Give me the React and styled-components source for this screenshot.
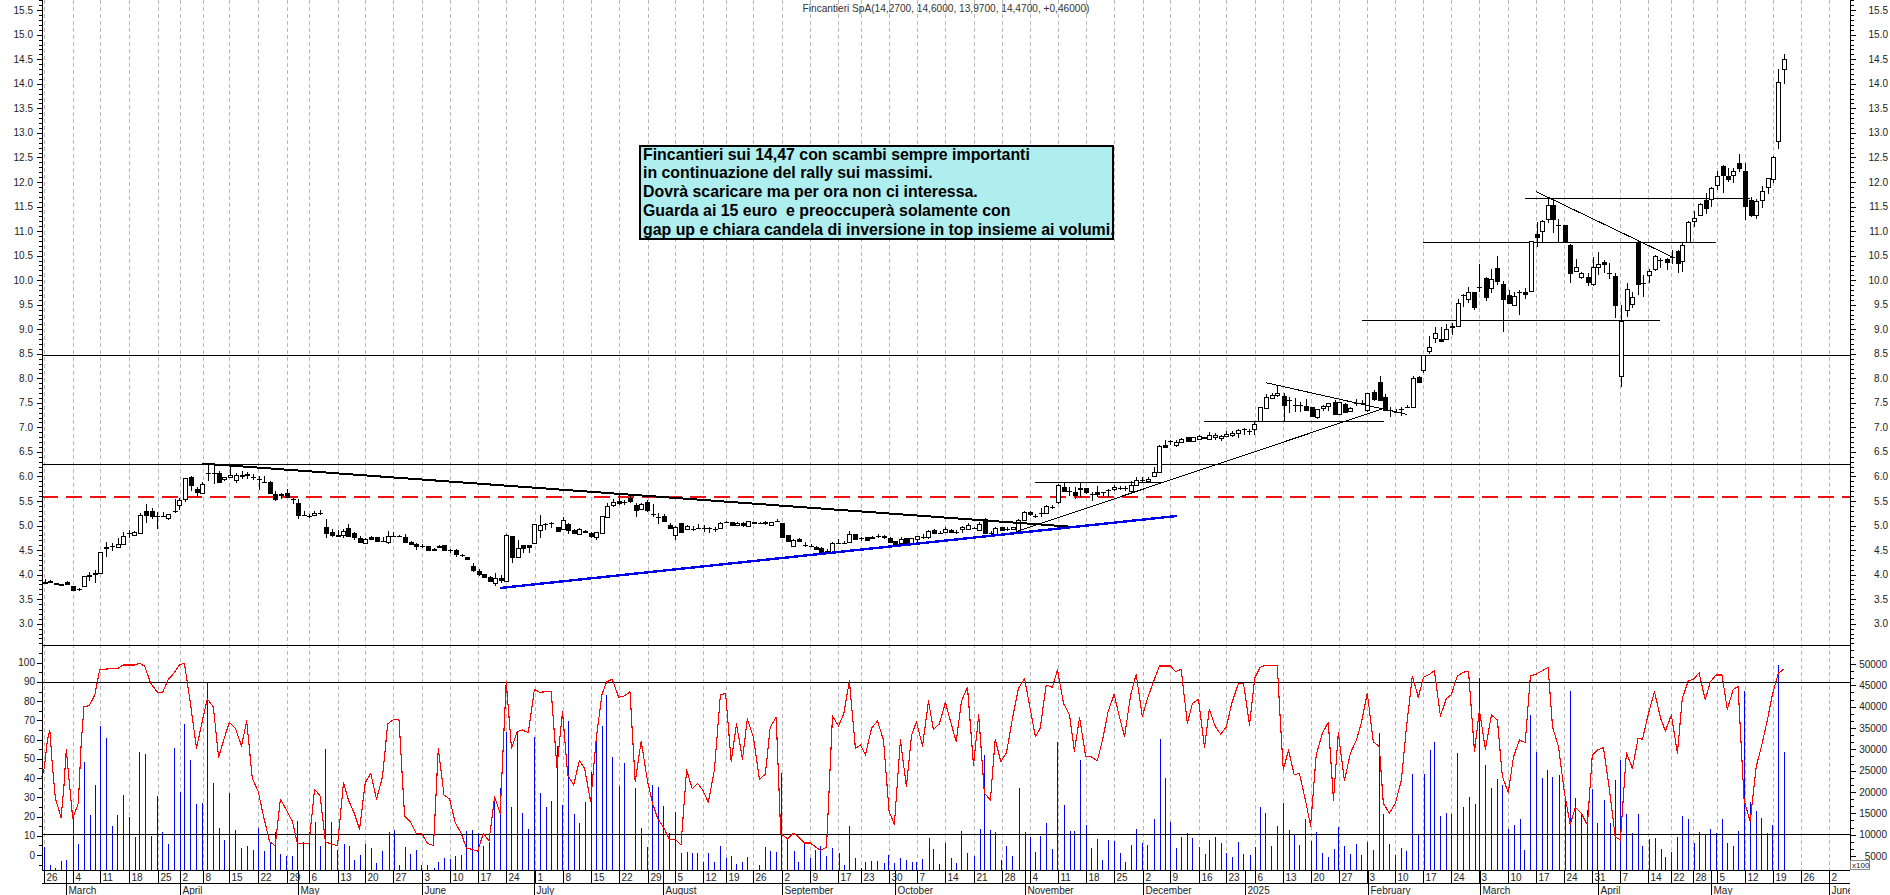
import React from "react";
import styled, { createGlobalStyle } from "styled-components";

const GlobalStyle = createGlobalStyle`
  html, body { margin: 0; padding: 0; background: #fff; }
`;
const Page = styled.div`
  position: relative; width: 1890px; height: 895px; overflow: hidden; background: #fff;
  font-family: "Liberation Sans", Arial, sans-serif;
`;
const ChartSvg = styled.svg`display: block;`;
const ChartTitle = styled.div`
  position: absolute; left: 42px; width: 1808px; top: 3px; text-align: center;
  font-size: 10.15px; line-height: 12px; color: #333;
`;
const Note = styled.div`
  position: absolute; left: 639px; top: 145px; width: 475px; height: 95px; box-sizing: border-box;
  border: 2px solid #000; background: #afeeee; padding: 0 0 0 2px;
  display: flex; flex-direction: column; justify-content: center;
  font-size: 15.9px; font-weight: 700; line-height: 18.8px; color: #000; white-space: pre;
`;
const GridLine = styled.line`stroke: #b8b8b8; stroke-width: 1; stroke-dasharray: 4 3;`;
const Rule = styled.line`stroke: #000; stroke-width: ${p => p.$w || 1};`;
const Trend = styled.line`stroke: ${p => p.$c || "#000"}; stroke-width: ${p => p.$w || 1};`;
const RedDash = styled.line`stroke: #f01010; stroke-width: 2; stroke-dasharray: 16 8;`;
const Wick = styled.line`stroke: #000; stroke-width: 1;`;
const Body = styled.rect`stroke: #000; stroke-width: 1; fill: ${p => (p.$filled ? "#000" : "#fff")};`;
const VolBar = styled.line`stroke: #0000ff; stroke-width: 1;`;
const Stoch = styled.polyline`fill: none; stroke: #ff0000; stroke-width: 1.1; stroke-linejoin: round;`;
const Label = styled.text`
  font-family: "Liberation Sans", Arial, sans-serif; font-size: 10px; fill: #222;
  text-anchor: ${p => p.$anchor || "start"};
`;
const TinyLabel = styled(Label)`font-size: 8px;`;
const TinyBox = styled.rect`fill: #fff; stroke: #888; stroke-width: 1;`;

const seg = (ox, sx, oy, rows) =>
  rows.map(([zx, t, b, h, l, f]) => ({
    x: Math.round(ox + zx / sx),
    t: Math.round(oy + t / 3),
    b: Math.round(oy + b / 3),
    h: Math.round(oy + h / 3),
    l: Math.round(oy + l / 3),
    f: !!f,
  }));

const candles = [
  ...seg(0, 3, 530, [
    [135,156,160,148,162,1],[150,152,155,150,157,1],[168,158,161,158,161,1],[184,162,166,161,167,1],[201,157,161,153,163,1],
    [219,169,181,167,183,1],[236,177,178,175,182,1],[252,139,168,137,170,0],[268,134,138,127,152,1],[285,130,132,120,158,1],
    [301,67,128,66,130,0],[319,52,54,36,80,1],[335,47,49,38,64,1],[353,43,52,25,53,0],[370,19,41,6,42,0],
  ]),
  ...seg(0, 3, 440, [
    [388,280,280,270,293,1],[402,277,285,272,288,0],[420,226,278,220,280,0],[438,214,224,192,248,1],[456,213,227,204,236,1],
    [472,228,228,215,268,1],[489,228,228,216,232,1],[505,223,233,223,240,0],[524,214,214,178,220,1],[537,181,194,175,210,0],
    [555,115,176,114,186,0],[573,111,134,108,153,1],[590,147,156,140,172,1],[606,132,158,125,160,0],[624,98,98,73,122,1],
    [641,98,98,74,132,1],[657,98,126,94,128,1],[672,112,118,110,122,0],[689,106,112,78,114,0],[708,106,120,100,128,0],
    [725,104,108,93,116,1],[741,102,105,96,116,1],[758,111,111,103,119,1],[776,116,116,108,150,1],[792,125,125,108,128,1],
    [810,126,158,124,162,1],[826,163,176,153,182,1],[842,162,166,160,176,1],[860,160,170,147,173,1],[878,178,178,173,192,1],
    [895,190,224,178,237,1],[912,225,225,213,229,1],[926,227,227,221,235,1],[943,218,226,212,228,0],[961,219,219,210,226,1],
    [977,262,278,237,294,1],[995,277,286,268,292,1],[1013,285,289,271,290,1],[1028,274,286,266,293,0],[1045,265,287,252,288,1],
    [1062,278,292,276,300,1],[1079,294,305,288,308,1],[1095,298,310,294,312,0],[1113,290,297,288,300,1],[1131,292,304,292,305,1],
    [1149,302,302,290,306,1],[1164,289,305,274,312,0],[1180,287,287,276,292,1],[1197,288,288,284,291,1],[1214,292,305,282,308,1],
    [1233,306,311,304,316,1],[1249,313,317,309,330,1],[1265,317,317,312,323,1],[1284,319,329,319,330,1],[1301,326,331,325,332,1],
    [1316,319,322,316,323,1],[1333,316,331,314,332,1],[1350,331,331,326,338,1],[1368,330,342,327,350,1],[1385,345,345,342,350,1],
    [1402,352,358,352,360,1],
  ]),
  ...seg(0, 3, 530, [[1419,108,120,99,126,1],[1436,123,132,117,138,1]]),
  ...seg(480, 2.613, 470, [
    [10,313,320,311,324,1],[25,321,332,318,335,1],[40,325,338,308,347,0],[55,323,329,315,340,1],[68,196,334,193,336,0],
    [84,198,262,198,280,1],[98,234,262,210,262,0],[113,226,234,224,248,1],[127,226,232,224,248,1],[141,163,220,162,222,0],
    [157,166,179,136,205,0],[171,163,163,158,180,1],[186,160,160,155,175,1],[203,172,182,170,184,1],[217,149,176,140,176,0],
    [231,162,180,160,193,1],[245,180,189,176,193,1],[259,178,191,174,193,0],[275,184,187,181,190,1],[290,190,199,186,203,1],
    [304,187,201,185,210,0],[319,139,188,138,188,0],[332,109,140,100,142,0],[347,96,106,88,112,0],[362,94,98,70,105,1],
    [377,96,96,90,104,1],[392,83,92,78,100,1],[407,105,120,100,140,1],[421,102,118,100,120,0],[436,96,120,90,125,1],
    [451,132,132,102,140,1],[465,140,140,128,162,1],[480,138,152,133,153,1],[496,165,174,160,177,1],[510,172,194,168,210,0],
    [525,160,186,158,190,1],[540,168,178,165,180,0],[556,177,177,168,182,1],[570,173,173,163,178,1],[585,173,173,165,185,1],
    [598,175,175,170,190,1],[614,176,176,170,186,1],[628,160,173,155,175,0],[642,155,157,152,158,1],[658,157,166,155,167,1],
    [672,160,166,156,168,0],[686,160,164,157,172,1],[701,154,167,152,170,0],[716,155,158,155,158,1],[731,160,160,157,163,1],
    [746,155,160,152,165,1],[760,157,165,157,165,0],[776,153,153,147,157,1],[789,160,200,158,200,1],[804,196,213,195,216,1],
    [818,210,227,208,228,0],[833,206,214,205,217,1],[848,225,225,217,231,1],[864,227,227,222,232,1],[878,230,237,227,240,1],
    [892,233,245,232,247,1],[907,242,242,237,248,1],[921,220,246,215,246,0],[936,219,219,208,220,1],[950,218,218,213,222,1],
    [965,192,215,184,216,0],[981,192,208,192,210,1],[996,204,204,200,212,1],[1010,202,210,200,214,1],[1024,200,204,198,206,1],
    [1040,198,198,193,204,1],[1056,197,202,195,208,1],[1071,203,215,200,218,1],[1085,213,222,212,225,1],[1100,208,218,200,222,0],
    [1114,204,222,204,222,1],[1127,204,222,204,222,0],[1142,199,206,197,216,0],[1157,201,201,193,207,1],[1171,184,201,180,206,0],
    [1187,181,189,176,192,1],[1202,188,188,183,193,1],[1216,178,186,170,187,0],[1231,179,186,176,188,1],[1245,186,186,180,192,1],
    [1260,171,178,167,190,0],[1275,165,176,160,178,0],[1290,175,175,172,178,1],[1304,162,179,155,181,0],[1320,148,190,145,192,1],
    [1334,190,190,183,192,1],[1347,175,192,172,193,0],[1363,172,180,170,182,1],[1378,178,178,172,184,1],[1392,172,177,172,177,0],
    [1407,150,182,146,183,0],[1421,127,150,122,150,0],[1437,125,133,124,137,1],[1451,137,137,133,145,1],[1465,130,130,115,140,1],
    [1480,108,130,105,131,0],[1495,110,110,106,117,1],
  ]),
  ...seg(1040, 3, 360, [
    [53,376,427,372,432,0],[72,380,392,370,396,1],[87,393,393,380,408,1],[105,395,404,382,416,1],[120,385,388,368,410,1],
    [138,385,397,383,402,1],[155,402,402,395,422,1],[172,395,401,378,410,1],[188,397,397,395,408,1],[205,391,391,388,410,1],
    [222,381,387,375,392,0],[240,383,383,378,390,1],[255,384,384,378,392,1],[273,376,394,362,398,0],[289,360,375,352,378,0],
    [307,361,361,350,366,1],[323,356,362,350,366,0],[341,337,349,322,350,0],[358,257,337,256,339,0],[375,256,260,241,265,1],
    [391,244,244,240,255,1],[408,247,256,240,262,0],[424,236,246,234,250,0],[443,230,244,230,244,1],[459,232,242,232,242,0],
    [476,229,236,224,240,0],[493,230,235,230,235,1],[508,224,236,216,238,0],[525,225,232,218,240,0],[542,228,234,224,242,0],
    [559,222,228,212,230,0],[576,219,226,212,230,0],[594,209,218,207,235,0],[611,208,208,204,225,1],[628,212,212,208,226,1],
    [643,192,208,187,224,0],[660,142,184,141,184,0],[677,112,145,103,146,0],[696,106,114,100,118,0],[712,100,106,74,112,0],
    [731,109,136,100,186,1],[748,120,120,112,160,1],[765,134,134,115,155,1],[780,135,135,125,155,1],[797,139,149,116,152,1],
    [815,142,168,140,170,1],[830,148,170,146,178,0],[848,137,143,135,153,0],[864,130,137,128,153,0],[884,127,163,120,165,1],
    [897,127,163,127,163,0],[915,132,157,130,158,1],[930,143,154,140,156,0],[948,130,130,118,138,1],[965,129,129,120,135,1],
    [982,100,151,98,155,0],[1001,97,117,90,124,1],[1019,67,119,47,120,1],[1034,112,150,103,152,1],[1049,150,150,140,170,1],
    [1067,155,155,147,160,1],[1083,147,147,140,167,1],[1101,140,140,136,143,1],[1118,54,141,48,143,0],[1137,52,65,47,68,1],
  ]),
  ...seg(1400, 3, 40, [
    [69,945,990,944,998,0],[86,922,932,888,942,0],[104,880,895,862,908,0],[122,896,904,862,905,1],[138,868,896,852,900,0],
    [156,858,862,850,885,1],[173,790,858,778,860,0],[190,766,766,762,800,1],[205,757,778,742,788,0],[223,757,800,755,810,1],
    [238,740,740,672,755,1],[258,715,770,710,782,1],[273,717,745,686,758,0],[292,685,722,648,736,1],[308,733,778,724,876,1],
    [327,766,788,750,790,1],[341,767,794,755,797,0],[358,755,755,750,825,1],[375,756,761,745,776,1],[393,604,752,603,752,0],
    [410,583,590,545,622,1],[426,544,574,540,606,0],[444,496,538,472,550,0],[458,496,536,476,578,1],[475,555,555,538,605,1],
    [494,555,602,555,610,1],[511,616,698,612,728,1],[528,682,692,658,695,0],[544,700,712,697,716,0],[563,712,725,698,738,1],
    [579,680,733,652,738,0],[594,673,680,636,705,0],[611,666,671,660,700,1],[627,698,698,670,716,1],[646,709,794,698,833,1],
    [662,842,1008,794,1040,0],[680,746,810,730,830,0],[696,772,791,755,803,0],[715,606,731,604,765,1],[730,729,729,705,770,1],
    [747,692,706,686,730,0],[764,647,688,646,693,0],[780,661,661,655,683,1],[800,658,667,655,689,1],[815,650,650,630,672,1],
    [834,632,668,630,700,1],[847,614,664,610,695,0],[864,545,606,544,610,0],[882,535,544,514,560,0],[899,491,525,490,527,0],
    [918,481,503,460,522,1],[933,443,478,440,500,0],[951,407,436,392,450,0],[969,379,406,376,458,1],[984,409,418,385,425,1],
    [1000,392,405,385,428,0],[1017,370,383,343,395,1],[1035,392,499,370,540,1],[1052,481,524,472,530,1],[1068,484,526,476,536,0],
    [1086,452,481,438,503,0],[1103,415,441,415,461,0],[1118,350,416,349,428,0],[1135,127,304,88,326,0],[1152,58,88,42,132,0],
  ]),
];

const volRows = [
  [0, [[110,622],[124,675],[138,683],[153,663],[165,660],[181,535],[195,612],[210,367],[223,525],[236,435],[250,258],[264,294],[278,558],[292,525],[307,465],[322,532],[335,592],[347,336],[362,342],[377,588],[392,468],[404,576],[419,612],[434,324],[447,456],[459,252],[474,360],[489,492],[504,489],[516,127],[531,429],[544,564],[558,600],[571,459],[586,570],[601,624],[616,618],[629,630],[643,564],[656,633],[671,606],[685,576],[698,642],[713,648],[728,648],[740,543],[755,606],[769,576],[783,546],[797,618],[810,327],[825,546],[840,630],[855,612],[868,618],[881,660],[895,645],[909,612],[923,624],[937,670],[952,633],[967,576],[980,570],[993,675],[1007,621],[1021,642],[1036,630],[1049,675],[1064,675],[1079,685],[1091,666],[1105,654],[1119,657],[1133,648],[1148,645],[1161,573],[1175,570],[1189,579],[1203,618],[1217,606],[1229,486],[1245,444],[1260,276],[1273,500],[1287,276],[1300,519],[1315,567],[1330,291],[1343,459],[1358,501],[1372,483],[1386,318],[1399,495],[1413,243],[1428,522],[1442,549],[1455,486],[1470,396],[1484,291],[1498,258],[1509,165],[1524,351],[1540,438],[1554,369]]],
  [630, [[13,444],[28,564],[43,621],[56,435],[69,441],[83,498],[98,579],[113,516],[127,640],[141,636],[155,639],[168,639],[181,666],[195,639],[210,666],[225,618],[238,654],[252,648],[265,672],[280,666],[292,651],[307,690],[322,675],[337,621],[349,633],[364,636],[375,399],[392,597],[407,633],[419,666],[434,609],[449,654],[461,630],[474,618],[489,648],[504,624],[519,639],[532,675],[546,558],[561,654],[576,684],[586,666],[601,663],[616,663],[631,669],[643,645],[658,669],[673,654],[688,660],[701,666],[713,666],[728,657],[743,594],[755,627],[770,672],[785,609],[798,654],[812,669],[825,573],[840,639],[855,648],[870,567],[882,345],[897,570],[909,576],[923,660],[937,618],[952,648],[967,444],[982,576],[995,591],[1009,636],[1021,588],[1036,549],[1051,627],[1064,306],[1079,495],[1094,573],[1106,573],[1119,360],[1134,555],[1148,624],[1163,597],[1176,660],[1190,600],[1205,603],[1220,639],[1231,666],[1246,615],[1260,567],[1275,609],[1288,615],[1303,537],[1318,297],[1332,414],[1345,546],[1358,624],[1372,591],[1387,579],[1400,594],[1415,621],[1430,642],[1442,600],[1457,591],[1470,609],[1484,639],[1499,651],[1514,606],[1527,642],[1542,645],[1555,621]]],
  [1260, [[0,501],[13,519],[28,618],[43,558],[58,489],[71,570],[85,585],[98,615],[113,537],[128,603],[140,576],[155,639],[170,651],[183,627],[195,561],[210,618],[225,642],[240,612],[252,645],[267,606],[282,630],[297,279],[307,522],[322,612],[337,645],[352,624],[364,633],[379,402],[394,585],[407,402],[422,330],[434,306],[449,528],[464,519],[476,522],[491,339],[506,501],[519,471],[534,492],[546,114],[561,375],[576,444],[591,417],[603,435],[618,567],[631,555],[646,537],[658,630],[673,225],[688,336],[703,414],[715,390],[728,411],[743,405],[758,470],[772,153],[785,474],[800,520],[815,510],[827,447],[840,549],[855,480],[870,549],[884,420],[897,360],[912,522],[927,579],[941,522],[952,618],[967,597],[982,594],[997,627],[1009,651],[1024,636],[1039,591],[1051,528],[1066,537],[1079,609],[1093,576],[1108,585],[1121,567],[1135,579],[1150,537],[1163,609],[1178,618],[1190,573],[1205,153],[1220,486],[1235,513],[1248,534],[1263,579],[1275,555],[1290,75],[1303,336]]],
];
const volumes = volRows.flatMap(([ox, rows]) =>
  rows.map(([zx, zy]) => ({ x: Math.round(ox + zx / 2.489) + 0.5, y: Math.round(640 + zy / 3) }))
);

const stochRows = [
  [0, [[104,410],[110,385],[118,300],[124,270],[130,370],[138,475],[152,533],[159,440],[165,328],[172,420],[181,535],[195,490],[202,310],[209,200],[222,197],[236,165],[248,90],[264,87],[292,86],[307,75],[336,75],[347,70],[360,78],[375,130],[392,157],[405,157],[419,118],[434,98],[446,75],[459,70],[474,190],[489,325],[504,240],[516,177],[531,200],[544,352],[558,295],[571,247],[586,265],[601,318],[614,243],[628,415],[643,455],[656,530],[671,605],[685,617],[698,478],[713,510],[728,545],[740,610],[769,610],[783,448],[797,468],[810,606],[825,612],[840,617],[855,428],[868,482],[881,518],[895,568],[909,428],[923,400],[937,478],[952,410],[965,252],[980,238],[993,240],[1007,528],[1021,545],[1036,580],[1050,581],[1064,610],[1079,617],[1091,325],[1105,465],[1119,477],[1133,548],[1148,580],[1161,625],[1175,628],[1189,634],[1203,580],[1217,603],[1231,470],[1245,520],[1260,125],[1273,325],[1287,275],[1300,270],[1315,278],[1330,148],[1343,157],[1372,154],[1386,382],[1400,215],[1413,405],[1428,435],[1442,362],[1455,385],[1470,485],[1484,298],[1498,165],[1510,125],[1524,118],[1540,172],[1554,168]]],
  [630, [[0,155],[13,425],[28,303],[43,420],[56,490],[69,535],[83,560],[98,598],[113,598],[127,615],[141,390],[155,447],[168,430],[181,450],[195,487],[210,390],[225,165],[238,160],[252,365],[265,252],[280,358],[292,237],[307,290],[322,418],[337,402],[349,262],[364,232],[375,580],[392,597],[407,580],[419,590],[434,609],[449,609],[461,620],[474,631],[489,622],[504,228],[519,258],[532,222],[546,123],[561,325],[574,315],[586,345],[601,265],[616,243],[631,300],[645,515],[658,553],[673,300],[688,440],[701,285],[713,245],[728,318],[743,183],[755,268],[770,252],[785,187],[798,245],[812,305],[825,183],[840,142],[855,375],[868,225],[882,460],[897,480],[909,297],[923,365],[937,338],[952,235],[967,145],[982,115],[1009,290],[1021,265],[1036,135],[1051,142],[1064,90],[1079,190],[1094,225],[1106,333],[1119,232],[1134,348],[1148,350],[1163,362],[1176,300],[1190,215],[1205,163],[1220,240],[1231,290],[1246,165],[1260,103],[1275,230],[1288,175],[1303,125],[1318,78],[1345,78],[1358,95],[1372,88],[1387,250],[1400,190],[1415,178],[1430,322],[1442,208],[1457,260],[1470,282],[1484,262],[1499,185],[1514,132],[1527,130],[1542,255],[1555,115]]],
  [1260, [[0,82],[13,76],[43,76],[50,230],[58,390],[71,330],[85,405],[98,400],[113,480],[126,558],[140,345],[155,280],[170,247],[183,480],[195,278],[210,422],[225,340],[240,300],[252,250],[267,160],[282,305],[297,320],[307,490],[322,520],[337,490],[352,420],[364,270],[379,108],[394,172],[407,112],[422,103],[434,92],[449,228],[464,175],[476,165],[491,108],[506,97],[519,94],[534,335],[546,210],[561,328],[576,225],[591,240],[603,408],[618,458],[631,350],[646,300],[660,308],[673,108],[688,102],[703,92],[717,82],[728,260],[743,320],[758,460],[772,553],[785,502],[800,520],[815,555],[827,345],[840,330],[855,323],[870,450],[884,590],[897,600],[912,338],[927,385],[941,295],[952,298],[967,220],[982,155],[997,235],[1009,273],[1024,225],[1039,340],[1051,175],[1066,122],[1079,118],[1093,98],[1108,180],[1121,125],[1135,105],[1150,105],[1163,208],[1178,148],[1190,140],[1205,480],[1220,545],[1235,380],[1248,320],[1263,240],[1275,165],[1290,100],[1303,88]]],
];
const stochPoints = stochRows
  .flatMap(([ox, rows]) => rows.map(([zx, zy]) => `${(ox + zx / 2.489).toFixed(1)},${(640 + zy / 3).toFixed(1)}`))
  .join(" ");

const weeks = [
  [44.2,"26"],[72.7,"4"],[100.4,"11"],[129.4,"18"],[157.5,"25"],[179.6,"2"],[202.5,"8"],[229.4,"15"],[258.3,"22"],[286.9,"29"],[309,"6"],[337.5,"13"],[365.2,"20"],[393.3,"27"],[421.5,"3"],[449.6,"10"],[477.7,"17"],[506.3,"24"],[534.6,"1"],[562.5,"8"],[590.6,"15"],[618.7,"22"],[647.7,"29"],[675.4,"5"],[702.7,"12"],[725.6,"19"],[753.3,"26"],[781.5,"2"],[809.6,"9"],[838.1,"17"],[861.4,"23"],[888.7,"30"],[916.5,"7"],[945.4,"14"],[973.9,"21"],[1001.6,"28"],[1029.8,"4"],[1057.5,"11"],[1085.6,"18"],[1114.1,"25"],[1142.7,"2"],[1170.4,"9"],[1198.5,"16"],[1226.2,"23"],[1254.7,"6"],[1283.3,"13"],[1311.4,"20"],[1339.3,"27"],[1367.3,"3"],[1395.4,"10"],[1423.3,"17"],[1451.3,"24"],[1479.3,"3"],[1508.3,"10"],[1536.3,"17"],[1564.3,"24"],[1592.3,"31"],[1620.3,"7"],[1648.3,"14"],[1671.3,"22"],[1693.3,"28"],[1716.7,"5"],[1744.7,"12"],[1772.7,"19"],[1801.3,"26"],[1829.3,"2"],
].map(([x, t]) => [Math.round(x) + 0.5, t]);

const months = [
  [66.3,"March"],[179.6,"April"],[297.7,"May"],[421.5,"June"],[534.4,"July"],[663,"August"],[781.5,"September"],[894.8,"October"],[1025,"November"],[1142.7,"December"],[1244.7,"2025"],[1367.7,"February"],[1479.8,"March"],[1597.5,"April"],[1710.8,"May"],[1829.3,"June"],
].map(([x, t]) => [Math.round(x) + 0.5, t]);

const priceY = p => 59.3 + (14.5 - p) * 49.08;
const range = (from, to, step) => {
  const out = [];
  for (let v = from; v <= to + 1e-6; v += step) out.push(+v.toFixed(3));
  return out;
};
const snap = y => Math.round(y) + 0.5;

const priceMinor = range(2.6, 15.7, 0.1).filter(p => priceY(p) < 645);
const priceMajor = range(3, 15.5, 0.5);
const stochY = v => 855 - 1.923 * v;
const stochTicks = range(-5, 100, 5);
const stochExtra = [105];
const stochMajor = range(0, 100, 10);
const volY = v => 856 - ((v - 5000) / 5000) * 21.33;
const volTicks = range(0, 55000, 5000 / 3).map(volY).filter(y => y > 647 && y < 870);
const volMajor = range(5000, 50000, 5000);

const noteLines = [
  "Fincantieri sui 14,47 con scambi sempre importanti",
  "in continuazione del rally sui massimi.",
  "Dovrà scaricare ma per ora non ci interessa.",
  "Guarda ai 15 euro  e preoccuperà solamente con",
  "gap up e chiara candela di inversione in top insieme ai volumi.",
];

function Candle({ c }) {
  const x = c.x + 0.5;
  const dash = c.b - c.t < 1;
  return (
    <g>
      <Wick x1={x} x2={x} y1={c.h} y2={c.l} />
      {dash ? (
        <Wick x1={c.x - 2} x2={c.x + 3} y1={c.t + 0.5} y2={c.t + 0.5} />
      ) : (
        <Body $filled={c.f} x={c.x - 2 + 0.5} y={c.t + 0.5} width={4} height={c.b - c.t} />
      )}
    </g>
  );
}

export default function App() {
  return (
    <Page>
      <GlobalStyle />
      <ChartSvg width="1890" height="895" viewBox="0 0 1890 895" xmlns="http://www.w3.org/2000/svg">
        <defs>
          <clipPath id="dateClip"><rect x="0" y="870" width="1850" height="25" /></clipPath>
        </defs>

        <g shapeRendering="crispEdges">
          {weeks.map(([x]) => <GridLine key={x} x1={x} x2={x} y1={0} y2={870} />)}
        </g>

        <g shapeRendering="crispEdges">
          {volumes.map((v, i) => <VolBar key={i} x1={v.x} x2={v.x} y1={v.y} y2={870} />)}
        </g>

        <g shapeRendering="crispEdges">
          <Rule x1={42} x2={1850} y1={355.5} y2={355.5} />
          <Rule x1={42} x2={1850} y1={464.5} y2={464.5} />
          <Rule x1={42} x2={1850} y1={645.5} y2={645.5} />
          <Rule x1={42} x2={1850} y1={682.5} y2={682.5} />
          <Rule x1={42} x2={1850} y1={834.5} y2={834.5} />
          <Rule x1={1035} x2={1163} y1={482.5} y2={482.5} />
          <Rule x1={1204} x2={1384} y1={421.5} y2={421.5} />
          <Rule x1={1362} x2={1660} y1={320.5} y2={320.5} />
          <Rule x1={1423} x2={1716} y1={242.5} y2={242.5} />
          <Rule x1={1525} x2={1750} y1={198.5} y2={198.5} />
          <RedDash x1={42} x2={1850} y1={497} y2={497} />
          {candles.map((c, i) => <Candle key={i} c={c} />)}
          <Trend x1={201.6} y1={463.5} x2={1075} y2={527} $w={2} />
          <Trend x1={500} y1={588} x2={1176.7} y2={516} $c="#0000e6" $w={2.4} />
          <Trend x1={1018.5} y1={530.9} x2={1385} y2={408} />
          <Trend x1={1266} y1={382.7} x2={1406.7} y2={414.3} />
          <Trend x1={1536.3} y1={191.7} x2={1671.7} y2={256.7} />
          <Stoch points={stochPoints} />
        </g>

        <g shapeRendering="crispEdges">
          <Rule x1={42.5} x2={42.5} y1={0} y2={870} />
          <Rule x1={1850.5} x2={1850.5} y1={0} y2={870} />
          <Rule x1={42} x2={1850} y1={870.5} y2={870.5} />
          <Rule x1={42} x2={1850} y1={883.5} y2={883.5} />
          {priceMinor.map(p => <Rule key={p} x1={39} x2={42} y1={snap(priceY(p))} y2={snap(priceY(p))} />)}
          {priceMinor.map(p => <Rule key={p} x1={1851} x2={1854} y1={snap(priceY(p))} y2={snap(priceY(p))} />)}
          {priceMajor.map(p => <Rule key={p} x1={37} x2={42} y1={snap(priceY(p))} y2={snap(priceY(p))} />)}
          {priceMajor.map(p => <Rule key={p} x1={1851} x2={1856} y1={snap(priceY(p))} y2={snap(priceY(p))} />)}
          {[...stochTicks, ...stochExtra].map(v => <Rule key={v} x1={39} x2={42} y1={snap(stochY(v))} y2={snap(stochY(v))} />)}
          {stochMajor.map(v => <Rule key={v} x1={37} x2={42} y1={snap(stochY(v))} y2={snap(stochY(v))} />)}
          {volTicks.map(y => <Rule key={y} x1={1851} x2={1854} y1={snap(y)} y2={snap(y)} />)}
          {volMajor.map(v => <Rule key={v} x1={1851} x2={1856} y1={snap(volY(v))} y2={snap(volY(v))} />)}
          {weeks.map(([x]) => <Rule key={x} x1={x} x2={x} y1={870} y2={883} />)}
          {months.map(([x]) => <Rule key={x} x1={x} x2={x} y1={870} y2={895} />)}
        </g>

        {priceMajor.map(p => (
          <Label key={p} $anchor="end" x={33} y={priceY(p) + 3.5}>{p.toFixed(1)}</Label>
        ))}
        {priceMajor.map(p => (
          <Label key={p} $anchor="end" x={1888} y={priceY(p) + 3.5}>{p.toFixed(1)}</Label>
        ))}
        {stochMajor.map(v => (
          <Label key={v} $anchor="end" x={35} y={stochY(v) + 3.5}>{v}</Label>
        ))}
        {volMajor.map(v => (
          <Label key={v} $anchor="end" x={1887} y={volY(v) + 3.5}>{v}</Label>
        ))}

        <g clipPath="url(#dateClip)">
          {weeks.map(([x, t]) => <Label key={x} x={x + 2} y={880.5}>{t}</Label>)}
          {months.map(([x, t]) => <Label key={x} x={x + 2} y={894}>{t}</Label>)}
        </g>

        <TinyBox x={1850.5} y={860.5} width={19} height={9} shapeRendering="crispEdges" />
        <TinyLabel x={1852} y={868}>x100</TinyLabel>
      </ChartSvg>

      <ChartTitle>Fincantieri SpA(14,2700, 14,6000, 13,9700, 14,4700, +0,46000)</ChartTitle>
      <Note>
        {noteLines.map(l => <div key={l}>{l}</div>)}
      </Note>
    </Page>
  );
}
